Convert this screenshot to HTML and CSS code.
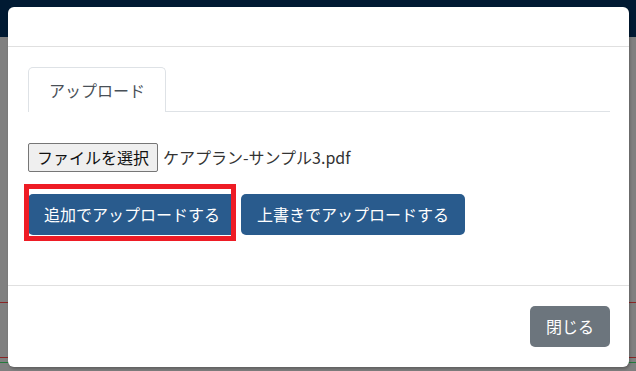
FILE: index.html
```html
<!DOCTYPE html>
<html lang="ja">
<head>
<meta charset="utf-8">
<title>アップロード</title>
<link rel="stylesheet" href="styles.css">
</head>
<body>
<div class="page">
  <div class="navbar"></div>
  <div class="page-content"></div>
</div>
<div class="modal">
  <div class="modal-header"></div>
  <div class="modal-body">
    <ul class="tabs">
      <li class="tab active">アップロード</li>
    </ul>
    <div class="file-row">
      <span class="file-btn">ファイルを選択</span>
      <span class="file-name">ケアプラン-サンプル3.pdf</span>
    </div>
    <div class="actions">
      <button class="btn btn-primary">追加でアップロードする</button>
      <button class="btn btn-primary">上書きでアップロードする</button>
      <span class="highlight"></span>
    </div>
  </div>
  <div class="modal-footer">
    <button class="btn btn-secondary">閉じる</button>
  </div>
</div>
</body>
</html>
```

FILE: styles.css
```css
html, body {
  margin: 0;
  padding: 0;
  height: 100%;
}
body {
  font-family: "Noto Sans CJK JP", "Noto Sans", "Liberation Sans", sans-serif;
  font-size: 16px;
  color: #212529;
  background: #808080;
  overflow: hidden;
}
.page {
  height: 100%;
  display: flex;
  flex-direction: column;
}
.navbar {
  height: 37px;
  background: #011a33;
}
.page-content {
  flex: 1;
  background:
    linear-gradient(#8a2626, #8a2626) 0 265px / 100% 1px no-repeat,
    linear-gradient(#8a2626, #8a2626) 0 320px / 100% 1px no-repeat,
    linear-gradient(#237a3c, #237a3c) 0 325px / 100% 1px no-repeat,
    #808080;
}
.modal {
  position: absolute;
  left: 8px;
  top: 7px;
  width: 621px;
  height: 360px;
  background: #fff;
  border-radius: 6px;
  box-shadow: 1px 2px 3px rgba(0, 0, 0, 0.25);
  display: flex;
  flex-direction: column;
}
.modal-header {
  height: 40px;
  box-sizing: border-box;
  border-bottom: 1px solid #e0e0e0;
}
.modal-body {
  flex: 1;
  padding: 20px 19px 20px 20px;
  position: relative;
}
.tabs {
  list-style: none;
  margin: 0;
  padding: 0;
  display: flex;
  border-bottom: 1px solid #dee2e6;
}
.tab {
  padding: 10px 20px;
  line-height: 24px;
  color: #495057;
  border: 1px solid #dee2e6;
  border-bottom: none;
  border-radius: 5px 5px 0 0;
  margin-bottom: -1px;
  background: #fff;
}
.file-row {
  margin-top: 31px;
  display: flex;
  align-items: center;
  gap: 5px;
}
.file-btn {
  display: inline-block;
  padding: 2px 8px;
  line-height: 23px;
  background: #efefef;
  border: 1px solid #767676;
  border-radius: 2px;
  color: #111;
}
.file-name {
  line-height: 23px;
  color: #333;
}
.actions {
  margin-top: 22px;
  display: flex;
  gap: 5px;
  position: relative;
}
.btn {
  font-family: inherit;
  font-size: 16px;
  line-height: 25px;
  padding: 8px 16px;
  border: none;
  border-radius: 5px;
  color: #fff;
  cursor: pointer;
}
.btn-primary {
  background: #295b8d;
}
.btn-secondary {
  background: #6c757d;
}
.highlight {
  position: absolute;
  left: -4px;
  top: -10px;
  width: 202px;
  height: 47px;
  border: 5px solid #ee1c25;
  pointer-events: none;
}
.modal-footer {
  height: 82px;
  box-sizing: border-box;
  border-top: 1px solid #e0e0e0;
  display: flex;
  justify-content: flex-end;
  align-items: center;
  padding: 0 19px;
}
```
